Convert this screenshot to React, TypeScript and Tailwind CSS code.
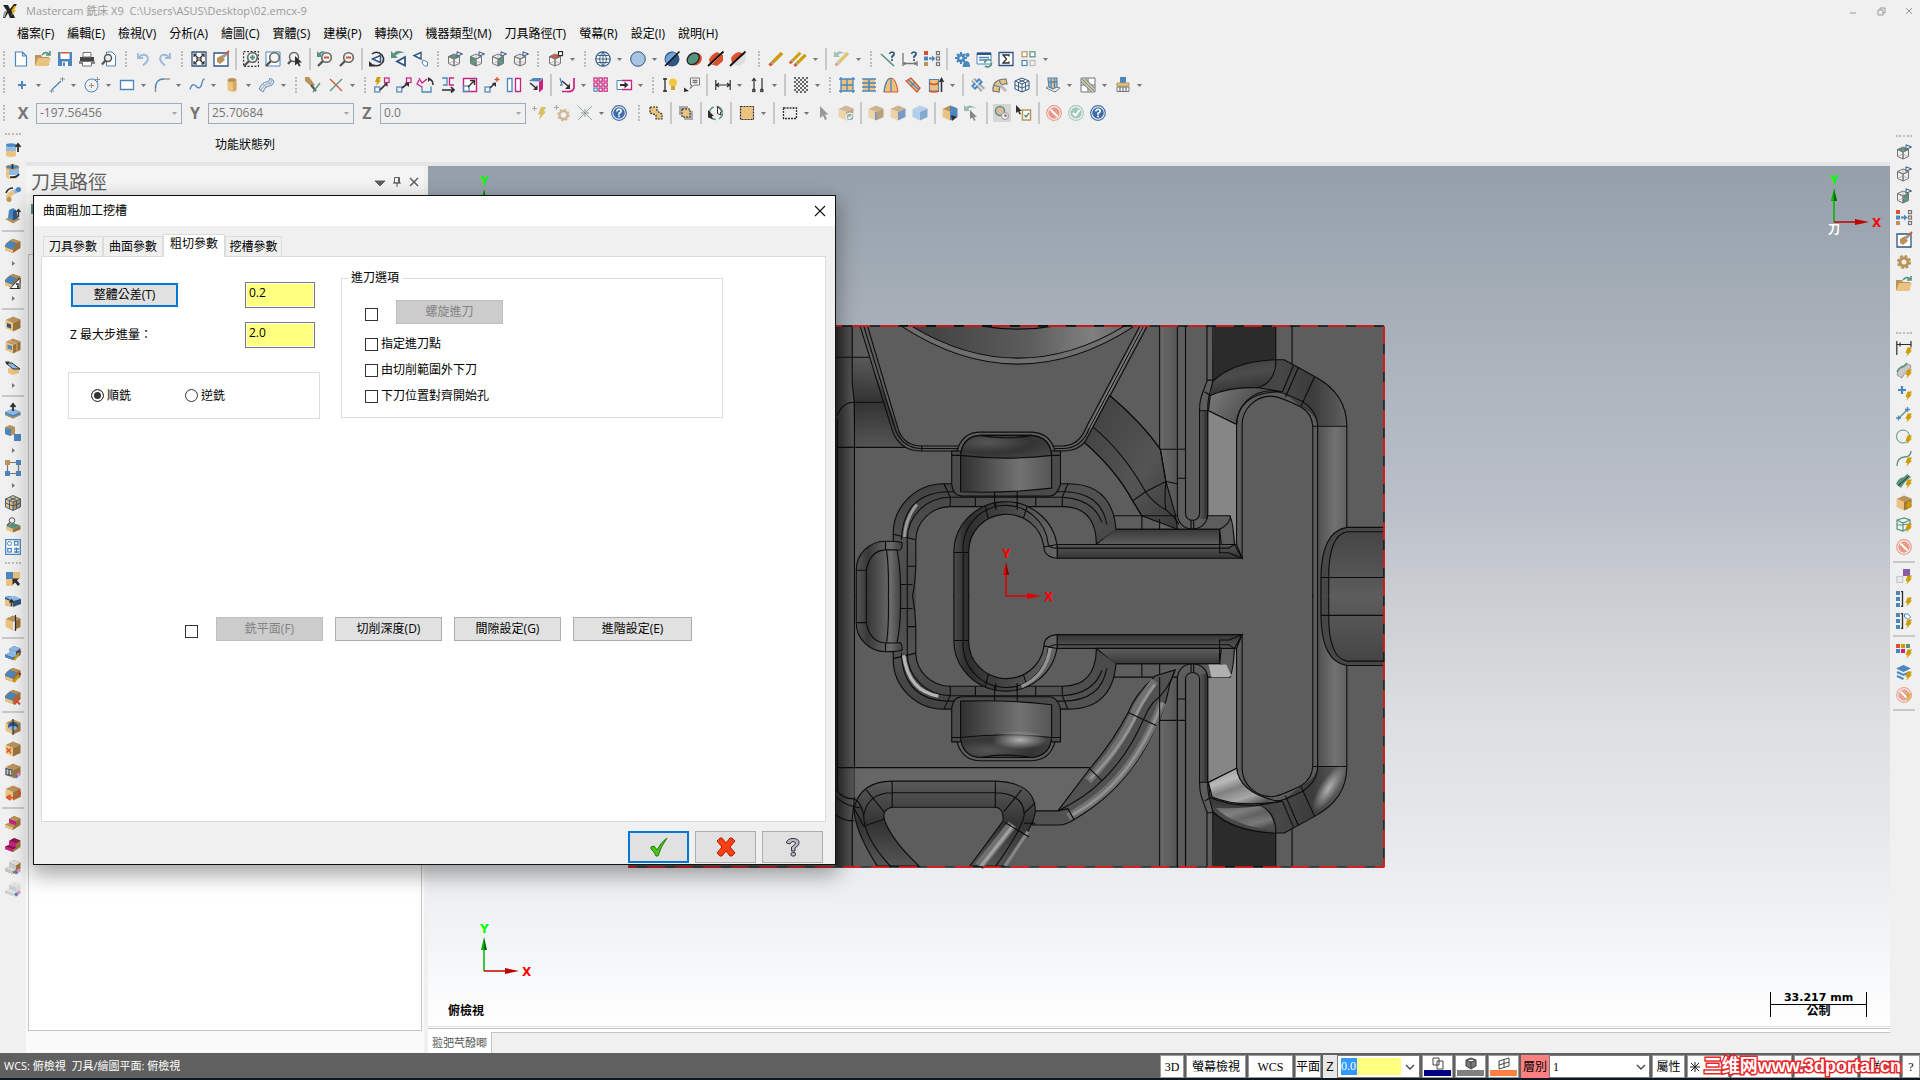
import type { ReactNode } from "react"

const BLUE = "#4b86bf"
const NAVY = "#2f5580"
const SKY = "#8fbbe6"
const TAN = "#b9935a"
const SAND = "#ebc381"
const BROWN = "#9c743e"
const GREEN = "#57937f"
const RED = "#da512f"
const PINK = "#c9217f"
const GRAY = "#757575"
const GOLD = "#cf9c00"
const INK = "#2f2f2f"

// Small shared pieces, all drawn on a 16x16 grid
const Line = ({ d, c = GRAY, w = 1.3, f = "none" }: { d: string; c?: string; w?: number; f?: string }) => (
  <path d={d} stroke={c} strokeWidth={w} fill={f} />
)
const Fill = ({ d, c }: { d: string; c: string }) => <path d={d} fill={c} />
const Cube = ({ t = TAN, l = SAND, r = BROWN }: { t?: string; l?: string; r?: string }) => (
  <>
    <Fill d="M8 .5L15.500 3.500 8 7 .5 4z" c={t} />
    <Fill d="M.5 4L8 7V15.500L.5 12z" c={l} />
    <Fill d="M15.500 3.500L8 7V15.500L15.500 12z" c={r} />
  </>
)
const Bolt = () => <Fill d="M11.500 6.500H16L14.300 9.500H16L10.500 15.500 11.500 12H9.500z" c={GOLD} />
const ViewCube = ({ t = "none", l = "none", r = "none", mark = true }: { t?: string; l?: string; r?: string; mark?: boolean }) => (
  <>
    <path d="M1.500 5.500L7 3 12.500 5.500 7 8z" fill={t} stroke={GRAY} />
    <path d="M1.500 5.500L7 8V15L1.500 12.500z" fill={l} stroke={GRAY} />
    <path d="M12.500 5.500L7 8V15L12.500 12.500z" fill={r} stroke={GRAY} />
    <Line d="M7 3V10L1.500 12.500M7 10L12.500 12.500" c="#9a9a9a" w={0.6} />
    {mark && <path d="M10 .8L15.500 3 10 5.200z" fill="#f0f0f0" stroke={NAVY} />}
  </>
)
const Lens = ({ sign, c = GREEN }: { sign?: string; c?: string }) => (
  <>
    <circle cx="9.500" cy="6.500" r="4.800" fill="#f4f4f4" stroke="#666" strokeWidth="1.600" />
    <Line d="M6 10L1 15" c="#555" w={2.400} />
    {sign && <Line d={sign} c={c} w={2} />}
  </>
)
const Pencil = () => (
  <>
    <Line d="M3 13L14 2" c={GOLD} w={3.400} />
    <Line d="M1.500 14.500L4 12" c={RED} w={3} />
    <Line d="M3.500 12.500L4.800 11.200" c="#aaa" w={3.200} />
  </>
)
const Badge = ({ c, children }: { c: string; children: ReactNode }) => (
  <>
    <circle cx="8" cy="8" r="7.300" fill="#fff" stroke={c} strokeWidth="1.200" />
    <circle cx="8" cy="8" r="5.800" fill={c} />
    {children}
  </>
)
const Ask = () => (
  <Badge c="#3f6da8">
    <Line d="M5.800 6.500Q6 4.300 8 4.300 10.300 4.500 10.200 6.300 10 7.600 8 8.300V9.800" c="#fff" w={1.600} />
    <Fill d="M7.200 10.600H8.900V12.200H7.200z" c="#fff" />
  </Badge>
)
const Ban = () => (
  <Badge c="#e79b8a">
    <Line d="M4.500 4.500L11.500 11.500" c="#fff" w={2} />
  </Badge>
)
const Eraser = () => (
  <>
    <Line d="M10 14.500L12.500 12.500" c={BLUE} w={3} />
    <Line d="M12.500 12.500L15 10.500" c="#e88bb5" w={3} />
  </>
)
const Step = ({ t = TAN, l = SAND, r = BROWN, u = t }: { t?: string; l?: string; r?: string; u?: string }) => (
  <>
    <Fill d="M4 4L9 1 15.500 3.500V10L8 15 0 12V9.500L4 8z" c={r} />
    <Fill d="M4 4L9 1 15.500 3.500 11 6.500z" c={t} />
    <Fill d="M4 4L11 6.500V11L4 8z" c={u} />
    <Fill d="M0 9.500L4 8 11 10.500 8 12.500z" c={t} />
    <Fill d="M0 9.500L8 12.500V15L0 12z" c={l} />
  </>
)
const Dome = ({ c = BLUE }: { c?: string }) => (
  <>
    <Fill d="M0 7Q4 2 8 1L15.500 3.500V10L8 15 0 12z" c={BROWN} />
    <Fill d="M0 9Q1 5 5 3L12 5Q8 8 8 12z" c={c} />
    <Fill d="M0 9L8 12V15L0 12z" c={SAND} />
    <Fill d="M5 3L8 1 15.500 3.500 12 5z" c={TAN} />
  </>
)
const Pointer = ({ c = INK }: { c?: string }) => <Fill d="M4 1L12.500 9.500H9L11 14 9 15 7 10.500 4 13z" c={c} />
const Net = () => (
  <>
    <path d="M8 1L15 4V12L8 15 1 12V4z" fill="#f4f4f4" stroke={NAVY} />
    <Line d="M1 4L8 7 15 4M8 7V15M1 8L8 11 15 8M4.500 2.500L11.500 5.500V13.500M11.500 2.500L4.500 5.500V13.500" c={NAVY} w={0.9} />
  </>
)
const Quad = ({ x, y, c, f = "none", s = 4 }: { x: number; y: number; c: string; f?: string; s?: number }) => (
  <rect x={x} y={y} width={s} height={s} fill={f} stroke={c} strokeWidth="1.200" />
)

const icons: Record<string, ReactNode> = {
  new: <path d="M2.500 1H9.500L13.500 5V15H2.500zM9.500 1V5H13.500" fill="#fff" stroke={BLUE} strokeWidth="1.200" />,
  open: <><Fill d="M0 4H6L7 6H14V14H0z" c={TAN} /><Fill d="M3 7H16L13 15H0z" c={SAND} /><Line d="M7 4Q10 0 14 3M15 0V4H11" c={GREEN} w={1.600} /></>,
  save: <><Fill d="M1 1H15V15H1z" c={BLUE} /><Fill d="M3.500 1H12.500V8H3.500z" c="#fff" /><Fill d="M3.500 1H12.500V2.500H3.500z" c={RED} /><Fill d="M5 10.500H11V15H5z" c="#fff" /><Fill d="M6 11.500H8V15H6z" c={BLUE} /></>,
  print: <><Fill d="M1 6H15V12H1z" c="#444" /><path d="M4 1.500H12V6H4z" fill="#fff" stroke={GRAY} /><Fill d="M0 10H16V13H0z" c="#888" /><path d="M3.500 10.500H12.500V15H3.500z" fill="#fff" stroke={GRAY} /></>,
  preview: <><path d="M5.500 1H11L14.500 4.500V15H5.500z" fill="#fff" stroke={BLUE} /><circle cx="7" cy="7" r="3.500" fill="#eee" stroke="#555" strokeWidth="1.500" /><Line d="M4.500 9.500L1 13.500" c="#555" w={2.200} /></>,
  undo: <Line d="M3 2V7H8M3.500 6.500Q8 2 12 5 15 9 8 14.500" c="#9db9d6" w={1.900} />,
  redo: <Line d="M13 2V7H8M12.500 6.500Q8 2 4 5 1 9 8 14.500" c="#9db9d6" w={1.900} />,
  fit: <><path d="M1 1H15V15H1z" fill="#fff" stroke={NAVY} strokeWidth="1.300" /><Line d="M3 6V3H6M10 3H13V6M13 10V13H10M6 13H3V10M3 3L7 7M13 3L9 7M3 13L7 9M13 13L9 9M6 7H10V9H6z" c={INK} w={1.100} /></>,
  repaint: <><path d="M1 2H15V15H1z" fill="#fff" stroke={NAVY} strokeWidth="1.300" /><Fill d="M4 7L9 4 12 9 7 13 4 11z" c={TAN} /><Line d="M10 6L13 3" c="#999" w={3} /><Line d="M13 3L16 0" c={RED} w={1.800} /></>,
  zoomWin: <><path d="M.6 .6H15.400V15.400H.6z" fill="none" stroke={INK} strokeWidth="1.100" strokeDasharray="2 1.500" /><Lens sign="M7 6.500H12M9.500 4V9" /></>,
  zoomTarget: <><path d="M1 1H15V15H1z" fill="#fff" stroke={BLUE} /><Lens /></>,
  zoomSel: <><circle cx="7" cy="6" r="4.500" fill="#f4f4f4" stroke="#666" strokeWidth="1.500" /><Line d="M4 9.500L1 13" c="#555" w={2.200} /><Fill d="M8 5L15 11.500H12L13.500 15 12 15.600 10.500 12.500 8 14.500z" c={INK} /></>,
  unzoomPrev: <><Lens sign="M7 6.500H12" c={RED} /><Fill d="M0 0V6H6L3.500 3.500Q6 1 9 1 4 -1 2 2z" c={GREEN} /></>,
  unzoom: <Lens sign="M7 6.500H12" c={RED} />,
  rotate: <><Line d="M3 3Q8 -1 13 4 17 10 11 14 7 15.500 4 14" c={INK} w={1.500} /><path d="M11.500 4.500L3.500 8 11.500 11.500z" fill="#fff" stroke={NAVY} strokeWidth="1.500" /><Fill d="M0 10V15.500H6z" c={INK} /></>,
  prevView: <><path d="M14 6L6 10.500 14 14.500z" fill="#fff" stroke={NAVY} strokeWidth="1.800" /><Fill d="M0 0V7H7L4.500 4.500Q8 1 14 2 6 -2 2.500 2.500z" c={GREEN} /></>,
  namedView: <><path d="M8 1.500L1 4.500 8 8z" fill="#fff" stroke={NAVY} strokeWidth="1.400" /><path d="M10 9L14.500 11V15H11.500L9 12z" fill="#fff" stroke={BLUE} /></>,
  top: <ViewCube t={GREEN} />,
  front: <ViewCube l={GREEN} />,
  right: <ViewCube r={GREEN} />,
  iso: <ViewCube />,
  cplane: <><ViewCube t={RED} mark={false} /><Quad x={10.500} y={0.600} c={INK} f="#fff" /></>,
  globe: <><circle cx="8" cy="8" r="7.200" fill="#fff" stroke={NAVY} strokeWidth="1.200" /><Line d="M8 1V15M1 8H15M8 1Q1 8 8 15M8 1Q15 8 8 15M2.500 4.500H13.500M2.500 11.500H13.500" c={NAVY} w={0.9} /></>,
  ball: <circle cx="8" cy="8" r="7.300" fill="#a9c4e2" stroke={NAVY} />,
  ballCut: <><circle cx="8" cy="8" r="7.500" fill={NAVY} /><path d="M3 13.500A7.500 7.500 0 0 1 13.500 3z" fill="#6ea3dc" /><Line d="M1 15L15.500 .5" c="#111" w={1.600} /></>,
  disc: <><ellipse cx="9" cy="9" rx="6.800" ry="6" transform="rotate(-40 8 8)" fill={RED} /><ellipse cx="7.500" cy="7.300" rx="7.300" ry="5.800" transform="rotate(-40 8 8)" fill="#222" /><ellipse cx="7.500" cy="7.300" rx="6" ry="4.400" transform="rotate(-40 8 8)" fill={GREEN} /></>,
  redCut: <><Fill d="M1 8Q4 3 9 1L15 4V10L9 15 2 13z" c={RED} /><Line d="M4 13L13 4" c="#ffb8a5" w={1} /><Line d="M0 15L15.500 .5" c="#111" w={1.800} /></>,
  redCut2: <><Fill d="M1 7Q4 2 9 1L15 3 2 13z" c={RED} /><Fill d="M15 4V11L9 15 3 13z" c="#ddd" /><Line d="M0 15L15.500 .5" c="#111" w={1.800} /></>,
  pencil: <Pencil />,
  pencils: <><g transform="translate(-2.500 0) scale(.85)"><Pencil /></g><g transform="translate(2 2) scale(.9)"><Pencil /></g></>,
  unpencil: <g opacity="0.5"><Pencil /><Fill d="M0 0V6H6L4 4Q7 1 11 3 6 -2 2 2z" c={GREEN} /></g>,
  askLine: <><Line d="M1 3L14 15" c={GREEN} w={1.700} /><Line d="M9.500 3Q10 1 12 1 14.500 1.500 14 3.500 13.500 4.500 12 5.500V7M12 8V10" c={NAVY} w={1.700} /></>,
  askDim: <><Line d="M1 2V15M15 10V15M1 12.500H15M3 11V14M13 11V14" /><Line d="M9.500 3Q10 1 12 1 14.500 1.500 14 3.500 13.500 4.500 12 5.500V7M12 8V10" c={NAVY} w={1.700} /></>,
  levels: <><Fill d="M0 0H4V4H0z" c={RED} /><Fill d="M0 5.500H4V9.500H0z" c={BLUE} /><Fill d="M0 11H4V15H0z" c={TAN} /><Line d="M5 7.500H10" c={BLUE} w={2} /><Fill d="M8 4.500L11.500 7.500 8 10.500z" c={BLUE} /><Quad x={12.500} y={0.600} c={GRAY} s={3} /><Quad x={12.500} y={6} c={GRAY} s={3} /><Quad x={12.500} y={11.500} c={GRAY} s={3} /></>,
  cogs: <><Line d="M7 1V13M1 7H13M3 3L11 11M11 3L3 11" c={BLUE} w={2.200} /><circle cx="7" cy="7" r="4" fill={BLUE} /><circle cx="7" cy="7" r="1.600" fill="#f0f0f0" /><circle cx="13.500" cy="4" r="2" fill={BLUE} /><Fill d="M8.500 16Q9 10 12.500 10 16 10 16 16z" c={BLUE} /></>,
  regen: <><path d="M1 2H15V13H1z" fill="#fff" stroke={BLUE} /><Fill d="M1 1.500H15V4H1z" c={NAVY} /><Line d="M3 6.500H13M3 9H10" c={BLUE} /><path d="M8.500 12A4 4 0 0 1 15 9.500M15.500 12A4 4 0 0 1 9 15" fill="none" stroke={GREEN} strokeWidth="1.800" /></>,
  sum: <><path d="M1 1.500H15V14.500H1z" fill="#fff" stroke={NAVY} strokeWidth="1.300" /><Line d="M11 5.500V4H5L8.500 8 5 12H11V10.500" c={INK} w={1.300} /></>,
  quads: <><Quad x={1} y={0.800} c={TAN} f="#fff" s={5} /><Quad x={9} y={0.800} c={GREEN} f="#fff" s={5} /><Quad x={1} y={9.500} c={BLUE} f="#fff" s={5} /><Quad x={9} y={9.500} c="#bbb" s={5} /></>,
  plus: <Line d="M8 4V12M4 8H12" c={BLUE} w={2} />,
  line: <><Line d="M3 12.500L12 4" c={BLUE} /><Line d="M.5 14H5M2.700 12V16M11 2H16M13.500 0V4.500" c="#888" w={0.9} /></>,
  circle: <><circle cx="7.500" cy="8.500" r="6.500" fill="none" stroke={BLUE} /><Line d="M5 8.500H10M7.500 6V11M11 2.500H16M13.500 0V5" c="#888" w={0.9} /></>,
  rect: <path d="M1.500 3.500H14.500V12.500H1.500z" fill="#fff" stroke={BLUE} strokeWidth="1.300" />,
  fillet: <><Line d="M1.500 15V9" c="#888" /><Line d="M1.500 11Q1.500 2 10 2" c={BLUE} /><Line d="M9 2H16" c="#888" /></>,
  spline: <Line d="M1 12.500Q3 5 7 9 11 14 13 6 13.500 3 15.500 1.500" c={BLUE} />,
  cyl: <><Fill d="M3.500 3H12.500V13Q8 16.500 3.500 13z" c={SAND} /><ellipse cx="8" cy="3" rx="4.500" ry="2" fill={TAN} /><Fill d="M9 5H12.500V13Q11 14.500 9 14.800z" c="#d8a862" /></>,
  surf: <><path d="M0 12Q3 5 8 5 11 4 11 1L15 4Q14 9 10 9 6 9 4 15z" fill="#dfe6ee" stroke={BLUE} strokeWidth="0.9" /><Line d="M2 13.500Q5 7 9 7 13 6 13 2.500M4 7L8 11M9 4L12 8" c="#999" w={0.8} /></>,
  trim: <><Fill d="M0 0L4 0 10 8 7 10 0 4z" c={TAN} /><Line d="M6 8L11 14" c="#555" w={2.200} /><Line d="M8 15L15 6" c={GREEN} /></>,
  breakX: <><Line d="M2 2L14 14" c={RED} /><Line d="M2 14L14 2" c={GREEN} /></>,
  xform1: <><Quad x={0.800} y={10} c={BLUE} s={5} /><Quad x={10.500} y={1} c={PINK} s={4.500} /><Line d="M6 13L12 7" c={INK} w={1.700} /><Fill d="M13.500 6V10L10 6.500z" c={INK} /><Fill d="M3 0H7L5 3.500H7L2 9 3 5H1z" c={GOLD} /></>,
  xform2: <><Quad x={0.800} y={10} c={BLUE} s={5} /><Quad x={10.500} y={1} c={PINK} s={4.500} /><Line d="M6 11L11 7" c={INK} w={1.700} /><Fill d="M13 5.500V10L8.500 6z" c={INK} /></>,
  rotateX: <><path d="M4 9.500V15H13V9.500" fill="none" stroke={BLUE} strokeWidth="1.300" /><Line d="M1 1L4 6 9 2M1 3L-1 7 4 10" c={PINK} /><Line d="M11 2Q15 3 15 8" c={INK} w={1.500} /><Fill d="M10 0V5L13 2z" c={INK} /></>,
  mirror: <><Line d="M2 1H7V8H3M7 8V1" c={BLUE} /><Line d="M14 1H9.500V8H14" c={PINK} /><Line d="M2 13H13M11 10L14 13 11 15.500" c={INK} w={1.700} /></>,
  scale: <><path d="M1.500 1.500H14.500V14.500H1.500z" fill="#fff" stroke={PINK} strokeWidth="1.400" /><Quad x={1.500} y={9} c={BLUE} s={5.500} /><Line d="M6 10L12 4M12.500 8V3.500H8" c={INK} w={1.400} /></>,
  moveTo: <><Quad x={1} y={10} c={BLUE} s={5} /><Line d="M6 11L10 7" c={INK} w={1.600} /><Fill d="M12 5.500V10L8 6z" c={INK} /><Line d="M13 0V5M10.500 2.500H15.500" c={RED} /></>,
  offset: <><path d="M1.500 1.500H6V14.500H1.500z" fill="#fff" stroke={BLUE} strokeWidth="1.300" /><path d="M9.500 1.500H14.500V14.500H9.500z" fill="#fff" stroke={PINK} strokeWidth="1.300" /></>,
  project: <><Fill d="M1 4L5 1H15L11 4.500z" c={BLUE} /><Fill d="M11 5L15 1.500V12L11 15.500z" c={PINK} /><Line d="M2 6L8 11" c={INK} w={1.600} /><Fill d="M9.500 8V13H5z" c={INK} /></>,
  wrap: <><Line d="M1 1L3 8H1" c={BLUE} /><Line d="M15 1V11Q14 15 8 14.500H3" c={PINK} w={1.700} /><Line d="M3 4L9 9" c={INK} w={1.600} /><Fill d="M11 6.500V12H6z" c={INK} /></>,
  array: <>{[1, 6, 11].map(y => [1, 6, 11].map(x => <Quad key={`${x}-${y}`} x={x} y={y} c={x === 1 && y === 11 ? BLUE : PINK} f="#fff" s={3.200} />))}</>,
  stretch: <><path d="M1 3.500H7V12.500H1z" fill="#fff" stroke={BLUE} /><path d="M6 3.500H15.500V12.500H6" fill="#fff" stroke={PINK} strokeWidth="1.300" /><Line d="M4 8H10" c={INK} w={2} /><Fill d="M8.500 4.500L12.500 8 8.500 11.500z" c={INK} /></>,
  bulb: <><Line d="M3 1V15M1 2H5M1 14H5" c={INK} /><circle cx="11" cy="5.500" r="4" fill="#efc93a" /><Fill d="M9 9H13V13H9z" c="#c9a53a" /></>,
  note: <><path d="M6.500 1H15.500V8H10L6 11.500 8 8H6.500z" fill="#fff" stroke={GRAY} /><Line d="M8.500 3.500H13.500M8.500 5.500H13.500" /><Fill d="M0 15V10.500L5 14z" c={INK} /></>,
  dimH: <Line d="M.8 3V13M15.200 3V13M1 8H15M4 6L1.500 8 4 10M12 6L14.500 8 12 10" c={INK} w={1.200} />,
  dimV: <><Line d="M4 1V13M12 1V13M2 4L4 1.500 6 4" c={INK} w={1.200} /><Quad x={2.800} y={12.500} c={INK} s={2} /><Quad x={10.800} y={12.500} c={INK} s={2} /></>,
  hatch: <>{[0, 2, 4, 6, 8, 10, 12, 14].map((y, i) => <path key={y} d={`M${1 + (i % 2) * 2} ${y + 1}H15`} stroke="#666" strokeWidth="2" strokeDasharray="2 2" />)}</>,
  netSurf: <><Fill d="M2 2H14V14H2z" c={SAND} /><Line d="M2 0V16M14 0V16M0 2H16M0 14H16M8 2V14M2 8H14" c={BLUE} w={1.300} /></>,
  ruled: <><Fill d="M2 2H14V14H2z" c={SAND} /><Line d="M1 2H15M1 6H15M1 10H15M1 14H15M8 2V14" c={BLUE} w={1.500} /></>,
  loft: <><path d="M1 15Q3 1 8 1 13 1 15 15z" fill={SAND} stroke={RED} /><Line d="M8 1V15M1 15Q2 5 6 1.500" c={BLUE} /></>,
  sweep: <><path d="M1 4L6 1 15 11 12 15z" fill={SAND} stroke={RED} strokeWidth="1.300" /><Line d="M3 2.500L14 13M6 9L10 5" c={BLUE} /></>,
  revolve: <><path d="M1.500 2.500H10.500V14H1.500z" fill={SAND} stroke={BLUE} strokeWidth="1.200" /><Line d="M1 6Q6 9 11 6M1 14Q6 16 11 14" c={RED} w={1.500} /><Line d="M13.500 15V3M11.500 5L13.500 1.500 15.500 5" c={INK} w={1.500} /></>,
  tsurf: <><Fill d="M1 4L5 1 15 11 11 15z" c="#aaa" /><Fill d="M1 9L9 1 13 5 5 13z" c={BLUE} /><Line d="M3 3L13 13M4 10L10 4" c="#eee" /></>,
  tsurf2: <><path d="M1 14Q0 2 14 2L15 7Q7 6 7 15z" fill={SAND} stroke={GRAY} strokeWidth="1.200" /><Line d="M2 8L8 10M7 3L9 7" c={BLUE} /><Line d="M8 8L14 14" c="#bbb" w={3} /></>,
  net: <Net />,
  plane: <><path d="M1 11L5 8 15 11 10 15z" fill="#fff" stroke={GRAY} /><path d="M3 1H12V10L8 12 4 10z" fill={SAND} stroke={BLUE} strokeWidth="1.200" /><Line d="M6 1V11M9.500 1V11M3.500 5H12" c={BLUE} /></>,
  stripe: <><path d="M1 1H15V15H1zM1 8H15M8 1V15" fill="#fff" stroke={GRAY} /><Line d="M3 3L13 13" c={BLUE} w={6} /><Line d="M3 3L13 13" c={SAND} w={4} /><Line d="M2 2L14 14" c={BLUE} w={1} /></>,
  press: <><Fill d="M5 0H11V6H5z" c={BLUE} /><path d="M2 6H14V9H2z" fill={SAND} stroke={TAN} /><path d="M2 14.500V10H14V14.500z" fill="#fff" stroke={GRAY} /><Line d="M5 10V14M8 10V14M11 10V14" c={GRAY} /></>,
  ptBolt: <g opacity="0.6"><Line d="M2.500 1V6M0 3.500H5" c={GRAY} w={1} /><Fill d="M9 2H14L11.500 6.500H14L7 15 8.500 9.500H6z" c={GOLD} /></g>,
  ptGear: <g opacity="0.6"><Line d="M2.500 0V5M0 2.500H5" c={GRAY} w={1} /><circle cx="9.500" cy="10" r="4" fill="none" stroke={TAN} strokeWidth="2.400" /><circle cx="9.500" cy="10" r="5.500" fill="none" stroke={TAN} strokeWidth="1.500" strokeDasharray="2.200 2.100" /></g>,
  cross: <g opacity="0.7"><Line d="M1 1L15 15M15 1L1 15" c={GREEN} w={1} /><Line d="M8 4V12M4 8H12" c={GRAY} w={1} /></g>,
  help: <Ask />,
  selA: <path d="M2 2H9V6L14 9V14H8V10L2 8z" fill={SAND} stroke={INK} strokeWidth="1.200" strokeDasharray="2 1" />,
  selB: <><Fill d="M1 1H10V4H4V10H1z" c="#aaa" /><Fill d="M15 6V15H6V12H12V6z" c="#aaa" /><path d="M4 4H12V12H4z" fill={SAND} stroke={INK} strokeDasharray="2 1" /></>,
  selC: <><circle cx="8" cy="8" r="6.500" fill="none" stroke={GREEN} strokeWidth="1.500" strokeDasharray="7 3.200" /><Fill d="M0 5L6 11H4L4.500 14 0 12.500z" c={INK} /><path d="M9.500 1.500L14.500 7H12.500L13 10 9.500 8.500z" fill="#fff" stroke={INK} /></>,
  selD: <path d="M1.500 1.500H14.500V14.500H1.500z" fill={SAND} stroke={INK} strokeWidth="1.200" strokeDasharray="2 1" />,
  selE: <path d="M1.500 3H14.500V13.500H1.500z" fill="none" stroke={INK} strokeWidth="1.300" strokeDasharray="2 1" />,
  ptr: <Pointer c="#999" />,
  solOk: <g opacity="0.6"><Cube /><circle cx="12" cy="12" r="4" fill={GREEN} stroke="#fff" /><Line d="M10 12L11.500 13.500 14 10.500" c="#fff" /></g>,
  solEdge: <g opacity="0.65"><Cube /><Line d="M8 7V15" c="#3f6da8" w={2} /></g>,
  solFace: <g opacity="0.65"><Cube r="#3f6da8" /></g>,
  solBody: <g opacity="0.65"><Cube t="#9bc0e8" l={SKY} r={BLUE} /></g>,
  solBack: <><Cube r={BLUE} t={TAN} /><Fill d="M8 .5L15.500 3.500 8 7z" c={BLUE} /><Fill d="M9 10L15 12 10 16z" c={INK} /></>,
  ptrBack: <g opacity="0.55"><Fill d="M0 0V6H6L4 4Q8 1 13 4 6 -2 2 2z" c={GREEN} /><Fill d="M6 5L13 12H10L11.500 15 10 16 8.500 12.500 6 14z" c={INK} /></g>,
  live: <><path d="M-1 -1H17V17H-1z" fill="#d6d6d6" /><circle cx="6" cy="6" r="4.500" fill="#e5b7a5" stroke={GREEN} strokeWidth="1.500" /><circle cx="11" cy="11" r="3.500" fill="#f0f0f0" stroke="#999" /><Line d="M11 9V11H13" /></>,
  check: <><Fill d="M0 0L6 6H3.500L5 9 3.500 9.500 2 6.500 0 8z" c={INK} /><path d="M6.500 5H14.500V15H6.500z" fill="#fff" stroke={TAN} strokeWidth="1.500" /><Line d="M8.500 10L10 12 13 8" c={GREEN} w={1.500} /></>,
  ban: <Ban />,
  okay: <Badge c="#a5c8ba"><Line d="M5 8L7.500 10.500 11.500 5" c="#fff" w={2} /></Badge>,
  sExtrude: <><Fill d="M1 3H11V9H1z" c={SKY} /><Fill d="M1 9H11V14Q6 16 1 14z" c={SAND} /><ellipse cx="6" cy="3" rx="5" ry="1.800" fill={BLUE} /><Line d="M13 10V3M10.500 5L13 2 15.500 5" c={INK} w={1.800} /></>,
  sRevolve: <><Fill d="M1 3H14V11H1z" c={SKY} /><Fill d="M1 3H4V13L14 15H4Q1 14 1 11z" c={SAND} /><ellipse cx="7.500" cy="3" rx="6.500" ry="2" fill={BLUE} stroke={TAN} /><Line d="M7.500 0V5M5 13Q12 14 14 10" c={INK} w={1.700} /></>,
  sSweep: <><Fill d="M1 10Q4 5 8 4L10 8Q6 9 6 14H2z" c={SAND} /><Fill d="M8 4L14 1V6L10 8z" c={SKY} /><circle cx="13.500" cy="3.500" r="2.500" fill={BLUE} /><circle cx="4" cy="13.500" r="2.500" fill={TAN} /><Line d="M1 7Q3 2 8 2" c={INK} w={1.700} /></>,
  sLoft: <><Fill d="M0 11L8 8 15.500 11 8 15.500z" c={TAN} /><Fill d="M4 2L8 0 11 2 13 10 8 12.500 3 10z" c={BLUE} /><Fill d="M8 3L11 2 13 10 8 12.500z" c={NAVY} /><Line d="M13.500 9V2M11.500 4L13.500 1.500 15.500 4" c={INK} w={1.300} /></>,
  sFillet: <Dome />,
  sFillet1: <><Dome /><path d="M15 5V15.500H5z" fill="#fff" stroke={INK} /><Line d="M11 11H13V14M12 14H14" c={INK} /></>,
  sShell: <><Cube /><Fill d="M2 7L6 8.500V12.500L2 11z" c={NAVY} /></>,
  sBool: <><Cube /><Fill d="M2.500 6.500L7 8V12L2.500 10.500z" c={BLUE} /><Line d="M4 3L12 6V14" c={SAND} w={0.8} /></>,
  sDraft: <><Fill d="M3 8L14 9V13L8 15 3 13z" c={SAND} /><path d="M1 3L7 3 15 9 8 9z" fill={SKY} stroke={INK} /><Fill d="M0 1.500H5L2 5z" c={INK} /></>,
  sThick: <><Fill d="M0 9L8 5.500 15.500 9V12L8 15.500 0 12z" c={BLUE} /><Fill d="M0 11L8 14 15.500 11V12L8 15.500 0 12z" c={TAN} /><Fill d="M0 9L8 5.500 15.500 9 8 12z" c={SKY} /><Line d="M8 8V2M5.500 4L8 1 10.500 4" c={INK} w={1.800} /></>,
  sCopy: <><Fill d="M0 2L5 0 10 2V9L5 11 0 9z" c={TAN} /><Fill d="M0 3L6 4V11L0 9z" c={BLUE} /><Fill d="M9 9H16V16H9z" c={BLUE} /></>,
  sPat: <><path d="M2.500 2.500H13.500V13.500H2.500z" fill="none" stroke={GRAY} strokeWidth="1.200" /><Fill d="M0 0H5V5H0z" c={TAN} /><Fill d="M11 0H16V5H11zM0 11H5V16H0zM11 11H16V16H11z" c={BLUE} /></>,
  sNet: <><Cube t={SAND} l={SAND} r={TAN} /><Line d="M.5 4L8 7 15.500 4M8 7V15M.5 8L8 11 15.500 8M4.500 2.500L11.500 5.500V13.500M11.500 2.500L4.500 5.500V13.500M8 .5L15.500 4V12L8 15.500 .5 12V4z" c={NAVY} w={0.9} /></>,
  sFind: <><Fill d="M1 9L8 12V15.500L1 13z" c={SAND} /><Fill d="M1 9L8 6 15.500 8.500 8 12z" c={GREEN} /><Fill d="M15.500 8.500V12.500L8 15.500V12z" c={BROWN} /><circle cx="7" cy="3.500" r="2.800" fill="#eee" stroke="#555" /><Line d="M5 5.500L2 8.500" c="#555" w={1.500} /></>,
  sTree: <><path d="M.7 .7H15.300V15.300H.7z" fill="#fff" stroke={BLUE} strokeWidth="1.300" /><circle cx="4.500" cy="4.500" r="2" fill="none" stroke={BLUE} /><Quad x={9.500} y={2.500} c={BLUE} s={3.500} /><Quad x={2.800} y={9.500} c={BLUE} s={3.500} /><Line d="M9 10H14M9 13H14M11.500 8.500V14" c={BLUE} /></>,
  mSel: <><Fill d="M1 1H8V8H1z" c={BLUE} /><Fill d="M8 1H15V8H8zM1 8H8V15H1z" c={SAND} /><Fill d="M7.500 7.500H14L12 9.500 15 13 13 15 10 11.500 7.500 14z" c={INK} /></>,
  mPush: <><Fill d="M0 4L4 3 16 6V11L8 14 0 12z" c={NAVY} /><Fill d="M0 4L10 3 16 6 8 8z" c={SKY} /><Fill d="M0 6L8 9V14L0 12z" c={SAND} /><Line d="M6.500 13V8M4.500 9.500L6.500 7 8.500 9.500" c={INK} w={1.500} /></>,
  mSplit: <><Cube /><Fill d="M8 7L11 5.500V14L8 15.500z" c="#eee" /><Line d="M10.500 0V16" c={INK} w={1.200} /></>,
  eStep: <><Step t={SKY} l={BLUE} r={NAVY} /><Line d="M9 15L14 8" c={GOLD} w={2.200} /><Line d="M14 8L15.500 6" c="#933" w={2.200} /></>,
  eDome: <><Dome /><Line d="M9 15L14 8" c={GOLD} w={2.200} /><Line d="M14 8L15.500 6" c="#933" w={2.200} /></>,
  xDome: <><Dome /><Line d="M9 9L15 15.500M15 9L9 15.500" c={RED} w={2} /></>,
  hole: <><Cube l={SAND} /><ellipse cx="8" cy="7" rx="5" ry="4" fill={NAVY} /><ellipse cx="8" cy="9" rx="4" ry="2" fill={SKY} /><Line d="M8 0V16" c={INK} w={1.200} /></>,
  xCube: <><Cube /><Line d="M1.500 7L6 12M6 7.500L1.500 11.500" c={RED} w={1.200} /></>,
  wCube: <><Cube /><Line d="M1 5.500V11.500L7 13V7zM4 6.500V12" c={NAVY} w={1.200} /><Eraser /></>,
  rCube: <><Cube /><Line d="M13 5Q17 8 14 11 10 13 4 12.500M5.500 10L2 12.500 5.500 15" c={RED} w={1.900} /></>,
  pStep: <Step u={PINK} />,
  pStep2: <Step t="#8a1757" l={PINK} u={PINK} />,
  gStep: <><Step t="#ddd" l="#c5c9cc" u="#c5c9cc" /><Eraser /></>,
  gStep2: <><Step t="#e2e2e2" l="#c9cdd0" u="#c9cdd0" r="#d6d8da" /><Eraser /></>,
  rGear: <><circle cx="8" cy="8" r="4" fill="none" stroke={TAN} strokeWidth="3" /><circle cx="8" cy="8" r="6" fill="none" stroke={TAN} strokeWidth="2.200" strokeDasharray="2.700 2" /></>,
  bDim: <><Line d="M.8 0V14M15 0V6M1 3.500H15M4 1.500V5.500" c={INK} w={1.200} /><Bolt /></>,
  bSurf: <><path d="M1 12Q2 5 8 4L12 1 15 3 14 6Q8 9 6 15z" fill="#c9c9cd" stroke="#999" /><Line d="M1 9Q3 4 8 3L11 0" c={GREEN} w={1.500} /><Bolt /></>,
  bPoint: <><Line d="M6 1V9M2 5H10" c={BLUE} w={2.200} /><Bolt /></>,
  bLine: <><Line d="M3 11L11 3" c={GREEN} /><Line d="M0 11H5M2.500 8.500V13.500M9 2.500H14M11.500 0V5" c={BLUE} /><Bolt /></>,
  bArc: <><circle cx="7" cy="7.500" r="6.500" fill="none" stroke={GREEN} /><Bolt /></>,
  bSpline: <><Line d="M1 15Q1 7 8 6 15 6 15 0" c={GREEN} w={1.300} /><Bolt /></>,
  bNet: <><path d="M0 11Q2 5 8 4L11 1 15 4Q9 8 5 15z" fill={GREEN} /><Line d="M2 13L13 3" c={INK} w={1} /><Bolt /></>,
  bSolid: <><Cube /><Bolt /></>,
  bWire: <><path d="M1 3L8 1 14 3V11L7 14 1 12zM1 3L7 6 14 3M7 6V14M1 8L14 7" fill="none" stroke={GREEN} strokeWidth="1.200" /><Bolt /></>,
  bColor: <><Fill d="M7 0H14V7H7z" c="#8a5bab" /><Quad x={0.700} y={7.500} c="#c5c9c9" f="#e8ecec" s={6} /><Bolt /></>,
  bGroup: <><Fill d="M0 0H4V4H0zM0 6H4V10H0zM0 12H4V16H0z" c={BLUE} /><Line d="M5 .6H6.500V15.400H5" c={INK} /><Bolt /></>,
  bGroup2: <><Fill d="M0 0H4V4H0zM0 6H4V10H0zM0 12H4V16H0z" c={BLUE} /><Line d="M5 .6H6.500V15.400H5" c={INK} /><path d="M8.500 1H12L14.500 4 12 6.500 8.500 4z" fill="#fff" stroke={BLUE} /><Bolt /></>,
  bPalette: <><Fill d="M0 1H4V5H0z" c={RED} /><Fill d="M5 1H9V5H5z" c={GOLD} /><Fill d="M10 1H14V5H10z" c={GREEN} /><Fill d="M0 6H4V10H0z" c={BLUE} /><Fill d="M5 6H9V10H5z" c={PINK} /><Bolt /></>,
  bLayers: <><Fill d="M7.500 0L15 3.500 7.500 7 0 3.500z" c={BLUE} /><Line d="M1 7L7.500 10 13 7.500M1 11L7.500 14" c={BLUE} w={2} /><Bolt /></>,
  bBan: <g opacity="0.9"><Ban /><g opacity="0.6"><Bolt /></g></g>,
}

const Icon = ({ name }: { name: string }) => (
  <svg viewBox="0 0 16 16" className="h-4 w-4 shrink-0 overflow-visible">{icons[name]}</svg>
)
const Caret = () => (
  <svg viewBox="0 0 5 3" className="h-[3px] w-[5px]"><path d="M0 0H5L2.500 3z" fill="#757575" /></svg>
)
const Grip = () => <span className="mx-[5px] h-4 w-0 shrink-0 border-l-2 border-dotted border-[#bdbdbd]" />

// "name+" is a button with a drop-down arrow, "|" a separator
function Tools({ items }: { items: string }) {
  return (
    <div className="flex items-center">
      {items.split(" ").map((item, i) => {
        if (item === "|") return <span key={i} className="mx-[3px] h-[22px] w-0 border-l-2 border-[#c8c8c8]" />
        const drop = item.endsWith("+")
        const name = drop ? item.slice(0, -1) : item
        return drop ? (
          <button key={i} aria-label={name} className="flex h-[22px] w-[35px] items-center justify-between pl-1 pr-1">
            <Icon name={name} />
            <Caret />
          </button>
        ) : (
          <button key={i} aria-label={name} className="flex h-[22px] w-[22px] items-center justify-center">
            <Icon name={name} />
          </button>
        )
      })}
    </div>
  )
}

function SideTools({ items }: { items: string }) {
  return (
    <div className="flex flex-col items-center">
      {items.split(" ").map((item, i) => {
        if (item === "|") return <span key={i} className="my-[3px] h-0 w-[22px] border-t-2 border-[#c8c8c8]" />
        if (item === ">") return <span key={i} className="flex h-[13px] items-center"><svg viewBox="0 0 3 5" className="h-[5px] w-[3px]"><path d="M0 0V5L3 2.500z" fill="#757575" /></svg></span>
        if (item === ":") return <span key={i} className="my-1 h-0 w-4 border-t-2 border-dotted border-[#bdbdbd]" />
        return (
          <button key={i} aria-label={item} className="flex h-[22px] w-[22px] items-center justify-center">
            <Icon name={item} />
          </button>
        )
      })}
    </div>
  )
}

const menus = ["檔案(F)", "編輯(E)", "檢視(V)", "分析(A)", "繪圖(C)", "實體(S)", "建模(P)", "轉換(X)", "機器類型(M)", "刀具路徑(T)", "螢幕(R)", "設定(I)", "說明(H)"]

const coords = [
  { axis: "X", value: "-197.56456" },
  { axis: "Y", value: "25.70684" },
  { axis: "Z", value: "0.0" },
]

function Header() {
  return (
    <header>
      <div className="flex h-[22px] items-center pl-[2px] pr-1">
        <svg viewBox="0 0 16 16" className="h-4 w-4">
          <path d="M1 2H6L8 6 12 1H15L10 8 13 15H8L6 10 3 15H1L5 8z" fill="#222" />
          <path d="M2 9L5 7 3 14H1z" fill="#999" />
          <path d="M12 3L9 8H11L9 13 14 7H12L14 3z" fill="#e2b100" />
        </svg>
        <h1 className="flex-1 whitespace-pre pl-2 text-[11px] leading-4 text-[#9b9b9b]">Mastercam 銑床 X9  C:\Users\ASUS\Desktop\02.emcx-9</h1>
        {["M4 9H10", "M4 6H9V11H4zM6 6V4H11V9H9", "M4 4L10 10M10 4L4 10"].map(d => (
          <button key={d} aria-label="window" className="ml-[14px] h-[14px] w-[14px]">
            <svg viewBox="0 0 14 14"><path d={d} fill="none" stroke="#9b9b9b" /></svg>
          </button>
        ))}
      </div>
      <nav className="flex h-[23px] items-center pl-[10px]">
        {menus.map(m => <button key={m} className="pl-[7px] pr-[6px] text-[12px] leading-4">{m}</button>)}
      </nav>
      <div className="-ml-[2px] flex h-7 items-center">
        <Grip />
        <Tools items="new open save print preview" /><Grip />
        <Tools items="undo redo" /><Grip />
        <Tools items="fit repaint | zoomWin zoomTarget zoomSel | unzoomPrev unzoom | rotate prevView namedView" /><Grip />
        <Tools items="top front right iso" /><Grip />
        <Tools items="cplane+" /><Grip />
        <Tools items="globe+ ball+ ballCut disc redCut redCut2" />
        <div className="w-1" /><Grip />
        <Tools items="pencil pencils+ | unpencil+" /><Grip />
        <Tools items="askLine askDim levels | cogs regen sum quads+" />
      </div>
      <div className="-ml-[2px] flex h-6 items-center">
        <Grip />
        <Tools items="plus+ line+ circle+ rect+ fillet+ spline+ cyl+ surf+" /><Grip />
        <Tools items="trim breakX+" /><Grip />
        <Tools items="xform1 xform2 rotateX mirror scale moveTo offset project | wrap+ array stretch+" /><Grip />
        <Tools items="bulb note | dimH+ dimV+ | hatch+" /><Grip />
        <Tools items="netSurf ruled loft sweep revolve+ | tsurf tsurf2 net | plane+ stripe+ press+" />
      </div>
      <div className="-ml-[2px] flex h-8 items-center">
        <Grip />
        {coords.map(c => (
          <div key={c.axis} className="flex items-center">
            <label htmlFor={`coord-${c.axis}`} className="w-[26px] text-center text-[16px] font-bold leading-5 text-[#757575]">{c.axis}</label>
            <span className="relative">
              <select id={`coord-${c.axis}`} className="block h-[21px] w-[146px] appearance-none border border-[#a0abba] px-[3px] text-[12px] leading-4 text-[#757575]">
                <option>{c.value}</option>
              </select>
              <span className="pointer-events-none absolute right-[5px] top-[9px] flex opacity-60"><Caret /></span>
            </span>
          </div>
        ))}
        <div className="w-[3px]" />
        <Tools items="ptBolt ptGear cross+ help" />
        <div className="w-[3px]" /><Grip />
        <Tools items="selA | selB | selC | selD+ | selE+ ptr solOk | solEdge solFace solBody | solBack ptrBack | live check | ban okay help" />
      </div>
    </header>
  )
}

function Axis({ up, right, className }: { up: string; right: string; className: string }) {
  return (
    <svg viewBox="0 0 60 60" className={`absolute h-[60px] w-[60px] font-['DejaVu_Sans'] text-[12px] font-bold ${className}`}>
      <path d="M10 50V24" stroke={up} strokeWidth="1.500" />
      <path d="M7 29L10 16 13 29z" fill={up} />
      <path d="M10 29V16L13 29z" fill="#000" fillOpacity="0.4" />
      <path d="M10 50H34" stroke={right} strokeWidth="1.500" />
      <path d="M31 47L45 50 31 53z" fill={right} />
      <text x="6" y="12" fill={up === "#00b400" ? "#00ff00" : "#ff0000"}>Y</text>
      <text x="48" y="55" fill="#ff0000">X</text>
    </svg>
  )
}

// Upper half of the cavity; the part is symmetric about its X axis
function CavityHalf() {
  return (
    <>
      {/* right runner */}
      <path d="M1065 43H1232V160L1062 200z" fill="#2b2b2b" stroke="none" />
      <path d="M1055 235L1062 195Q1120 140 1232 137H1255L1337 183Q1424 230 1424 320H1345Q1340 285 1300 267L1250 225 1170 214z" fill="url(#runner)" stroke="none" />
      <path d="M1345 318H1424V790H1345z" fill="url(#rail)" stroke="none" />
      <path d="M1062 200Q1120 140 1232 137 1235 195 1185 214L1055 235z" fill="url(#cap)" stroke="none" />
      <path d="M1062 195Q1120 140 1232 137H1255L1337 183Q1424 230 1424 320V790" />
      <path d="M1055 235Q1110 210 1185 214L1250 225Q1130 225 1126 315L1050 277z" fill="url(#cap2)" />
      <path d="M1050 277L1126 315V655L1108 566H1050z" fill="#868686" stroke="none" />
      <path d="M1026 277V575H1048V277z" fill="url(#wall)" stroke="none" />
      <path d="M1046 43V195L1030 240Q1026 255 1026 277V560C1026 585 988 585 988 560V43" />
      <path d="M1062 43V195L1052 235Q1048 250 1048 277V560C1048 617 966 617 966 560V43M1026 277H1050L1126 315M1040 225L1055 235M1046 193H1062M1003 580V603M1010 580V603" />
      <path d="M1232 43V150Q1225 205 1180 214M1276 43V150M1280 152L1250 225M1293 158L1258 240M1337 183L1300 265M1332 320H1424" />
      <path d="M1126 670V315A94 94 0 0 1 1220 222Q1245 222 1305 252 1345 280 1345 320V790M1332 790V320Q1330 285 1300 267 1240 237 1220 237A79 79 0 0 0 1141 315V685" />

      {/* sprue bars */}
      <path d="M918 603V683H988V603z" fill="#5d5d5d" stroke="none" />
      <path d="M641 645H1126L1141 683H641z" fill="url(#bar)" />
      <path d="M795 603H1080L1085 645H747z" fill="url(#bar2)" />
      <path d="M775 566H966M1048 566H1108Q1118 590 1120 645L1141 683 1105 668 1080 668V603H795L762 590M641 655H1105L1120 645M870 566V603M918 575V603M1110 566Q1108 590 1080 603" />
      <path d="M747 642L795 605 762 582z" fill="#444" />

      {/* rounded ring around the core pill */}
      <path d="M800 603Q790 478 670 478H335A137 137 0 0 0 198 617V790H259V632A93 93 0 0 1 352 541H655Q745 541 747 642z" fill="url(#ring)" stroke="none" />
      <path d="M800 603Q790 478 670 478H335A137 137 0 0 0 198 617V640" />
      <path d="M220 632Q225 500 352 500H655Q760 500 775 590M198 617L259 632M335 478L352 515V541M670 478L655 515V541M420 515V541M583 515V541" />
      <path d="M747 642Q745 541 655 541H352A93 93 0 0 0 259 632V705Q258 745 250 790M236 790V632A116 116 0 0 1 352 515H655Q740 520 762 585" />
      <path d="M362 790V667A140 139 0 0 1 641 650V683Q605 680 605 650A102 102 0 0 0 402 667V790z" fill="url(#pill)" stroke="none" />
      <path d="M362 790V667A140 139 0 0 1 641 650V683Q605 680 605 650A102 102 0 0 0 402 667V790" />
      <path d="M387 790V667A115 118 0 0 1 617 645Q622 655 641 655M362 667H402M447 540L455 575M475 530V550M533 530V550M560 540L550 572M605 652L641 645" />

      {/* upper pad */}
      <path d="M356 388H650V480Q640 512 620 512H385Q360 512 356 480z" fill="#4a4a4a" />
      <path d="M380 500V400Q385 347 435 345H572Q622 350 626 400V490Q500 505 380 500z" fill="url(#pad)" />
      <path d="M380 400Q385 347 435 345H572Q622 350 626 400 505 415 380 400z" fill="url(#padTop)" />
      <path d="M370 388Q385 336 433 336H572Q622 338 635 388M433 345Q502 358 572 345M356 400H380M626 400H650M472 500V541M533 500V541" />

      {/* side pad */}
      <path d="M222 640Q210 636 177 636A79 79 0 0 0 98 716V790H218Q218 700 208 662z" fill="url(#side)" stroke="none" />
      <path d="M222 640Q210 636 177 636A79 79 0 0 0 98 716V790M218 790Q218 700 208 662" />
      <path d="M125 790V716Q135 662 177 660H210Q222 665 222 640M185 790Q186 700 180 662M98 716H125M177 636V660M236 705H259M218 755H250" />

      {/* right pocket */}
      <path d="M1524 598H1424Q1354 610 1354 740V790H1524z" fill="#474747" stroke="none" />
      <path d="M1524 610H1424Q1375 620 1375 735V790H1524z" fill="url(#pocket)" stroke="none" />
      <path d="M1524 598H1424Q1354 610 1354 740V790M1524 610H1424Q1375 620 1375 735V790M1354 736H1524" />
    </>
  )
}

function Part() {
  return (
    <svg viewBox="0 0 757 544" className="absolute left-[200px] top-[159px] h-[544px] w-[757px]">
      <defs>
        <linearGradient id="runner"><stop offset="0" stopColor="#333" /><stop offset="0.500" stopColor="#474747" /><stop offset="0.750" stopColor="#3c3c3c" /><stop offset="1" stopColor="#606060" /></linearGradient>
        <linearGradient id="rail"><stop offset="0" stopColor="#505050" /><stop offset="0.600" stopColor="#727272" /><stop offset="1" stopColor="#606060" /></linearGradient>
        <linearGradient id="cap" x2="0.300" y2="1"><stop offset="0" stopColor="#3a3a3a" /><stop offset="0.500" stopColor="#4c4c4c" /><stop offset="1" stopColor="#303030" /></linearGradient>
        <linearGradient id="cap2" x2="1" y2="0.300"><stop offset="0" stopColor="#7c7c7c" /><stop offset="1" stopColor="#3c3c3c" /></linearGradient>
        <linearGradient id="wall"><stop offset="0" stopColor="#5a5a5a" /><stop offset="1" stopColor="#2d2d2d" /></linearGradient>
        <linearGradient id="bar" x2="0" y2="1"><stop offset="0" stopColor="#585858" /><stop offset="1" stopColor="#343434" /></linearGradient>
        <linearGradient id="bar2" x2="0" y2="1"><stop offset="0" stopColor="#383838" /><stop offset="1" stopColor="#5e5e5e" /></linearGradient>
        <linearGradient id="sweepFill" y2="1"><stop offset="0" stopColor="#3f3f3f" /><stop offset="0.600" stopColor="#545454" /><stop offset="1" stopColor="#3a3a3a" /></linearGradient>
        <linearGradient id="ring" x2="0.600" y2="1"><stop offset="0" stopColor="#3d3d3d" /><stop offset="0.400" stopColor="#525252" /><stop offset="1" stopColor="#444" /></linearGradient>
        <linearGradient id="pill"><stop offset="0" stopColor="#4b4b4b" /><stop offset="0.120" stopColor="#2d2d2d" /><stop offset="0.500" stopColor="#444" /><stop offset="1" stopColor="#666" /></linearGradient>
        <linearGradient id="pad"><stop offset="0" stopColor="#303030" /><stop offset="0.650" stopColor="#727272" /><stop offset="1" stopColor="#555" /></linearGradient>
        <radialGradient id="padTop" cx="0.300" cy="0.300" r="0.800"><stop offset="0" stopColor="#565656" /><stop offset="0.600" stopColor="#343434" /><stop offset="1" stopColor="#444" /></radialGradient>
        <radialGradient id="shine"><stop offset="0" stopColor="#b0b0b0" /><stop offset="1" stopColor="#b0b0b0" stopOpacity="0" /></radialGradient>
        <linearGradient id="side"><stop offset="0" stopColor="#555" /><stop offset="0.250" stopColor="#383838" /><stop offset="0.750" stopColor="#6b6b6b" /><stop offset="1" stopColor="#3b3b3b" /></linearGradient>
        <linearGradient id="pocket" x2="0" y2="1"><stop offset="0" stopColor="#454545" /><stop offset="1" stopColor="#5d5d5d" /></linearGradient>
        <linearGradient id="edge"><stop offset="0" stopColor="#2b2b2b" /><stop offset="1" stopColor="#5a5a5a" /></linearGradient>
        <linearGradient id="slab"><stop offset="0" stopColor="#6a6a6a" /><stop offset="1" stopColor="#555" /></linearGradient>
        <linearGradient id="fold" x2="0" y2="1"><stop offset="0" stopColor="#5a5a5a" /><stop offset="0.500" stopColor="#333" /><stop offset="1" stopColor="#555" /></linearGradient>
        <linearGradient id="bowl"><stop offset="0" stopColor="#3f3f3f" /><stop offset="0.550" stopColor="#5c5c5c" /><stop offset="0.850" stopColor="#808080" /><stop offset="1" stopColor="#666" /></linearGradient>
        <linearGradient id="toe" x2="0.700" y2="1"><stop offset="0" stopColor="#8a8a8a" /><stop offset="0.350" stopColor="#bababa" /><stop offset="0.550" stopColor="#808080" /><stop offset="0.800" stopColor="#a8a8a8" /><stop offset="1" stopColor="#555" /></linearGradient>
      </defs>
      <g transform="translate(192 -15) scale(.36996 .3635)" fill="none" stroke="#0c0c0c" strokeWidth="3">
        <path d="M-518 43H1524V1530H-518z" fill="#5d5d5d" stroke="none" />
        <path d="M918 43H966V600H918zM918 1010H966V1530H918z" fill="url(#slab)" stroke="none" />
        <path d="M43 43H93V1530H43z" fill="url(#edge)" stroke="none" />
        <path d="M87 130H133L230 378H93z" fill="url(#fold)" stroke="none" />
        <path d="M87 43V200L93 260V1345L87 1400V1530M47 300V1320M43 130H133M47 290Q60 254 93 254H170M47 378H230" />

        {/* bowl and funnel */}
        <path d="M218 43Q535 255 852 43z" fill="#6e6e6e" />
        <path d="M245 43Q535 222 825 43z" fill="url(#bowl)" />
        <path d="M430 43Q535 62 640 43" />
        <path d="M108 43L195 330Q215 388 275 388H375M118 43L204 330Q225 381 275 381H375M128 43L212 330Q228 374 275 374H375M275 374V388" />
        <path d="M875 43L728 325" stroke="#8a8a8a" strokeWidth="8" />
        <path d="M885 43L735 330Q715 388 655 388H630M875 43L728 325Q708 381 655 381H635M865 43L720 322Q700 374 655 374H630" />

        {/* upper curved runner */}
        <path d="M783 235Q870 310 920 383L935 472 960 560 966 603 870 566 845 525Q800 440 715 365L738 322z" fill="url(#sweepFill)" />
        <path d="M783 235Q870 310 920 383L935 472Q930 520 935 550M738 322Q820 390 880 500 900 530 935 550 960 570 970 590M715 365Q800 440 845 525L870 566M845 525L880 500 935 472 966 478M918 43V383H988M966 463H988" />

        <CavityHalf />
        <g transform="translate(0 1576) scale(1 -1)"><CavityHalf /></g>

        {/* highlights on the lower faces */}
        <path d="M1050 1300L1126 1261Q1135 1330 1240 1352 1130 1370 1060 1340z" fill="url(#toe)" />
        <path d="M1070 1370Q1150 1372 1190 1364 1225 1380 1228 1432 1120 1420 1070 1370z" fill="url(#toe)" stroke="none" opacity="0.500" />
        <ellipse cx="1375" cy="1315" rx="24" ry="75" transform="rotate(32 1375 1315)" fill="url(#shine)" stroke="none" />
        <path d="M226 950Q240 1050 320 1062" stroke="#b5b5b5" strokeWidth="9" />
        <path d="M228 625Q232 570 262 535" stroke="#999" strokeWidth="8" />
        <path d="M545 1036Q612 1005 622 930" stroke="#929292" strokeWidth="9" />
        <ellipse cx="540" cy="1183" rx="75" ry="26" fill="url(#shine)" stroke="none" />
        <path d="M1050 975H1098L1112 1005 1105 1010H1058z" fill="#b0b0b0" stroke="none" />

        {/* lower runner */}
        <path d="M93 1259H729L643 1378H582L540 1310 474 1296H195L93 1340z" fill="#666" stroke="none" />
        <path d="M905 1007Q850 1060 833 1107 790 1190 729 1262L643 1378H575V1417H643Q665 1417 687 1402 840 1310 909 1143 930 1110 945 1030L960 990z" fill="#515151" />
        <path d="M905 1020Q855 1090 845 1120 800 1215 725 1295" stroke="#707070" strokeWidth="22" />
        <path d="M905 1030Q862 1090 848 1130 805 1215 730 1290" stroke="#919191" strokeWidth="8" />
        <path d="M925 1080Q895 1160 860 1215 790 1330 670 1395" stroke="#707070" strokeWidth="22" />
        <path d="M925 1080Q895 1160 860 1215 790 1330 680 1390" stroke="#919191" strokeWidth="8" />
        <path d="M960 990Q940 1050 900 1080 885 1100 875 1125 830 1230 762 1295 720 1340 643 1378L670 1372 687 1402M833 1107L909 1143M729 1262L762 1295M918 1010V1530M966 1010V1530M988 1010V1530M918 1129H988M966 1070H988M47 1259H729" />

        {/* lower-left pocket */}
        <path d="M155 1530Q92 1430 92 1370 110 1296 195 1296H474Q582 1300 582 1378 580 1420 500 1530H405L495 1405Q497 1370 474 1368H195Q165 1375 175 1405 195 1460 268 1530z" fill="url(#fold)" />
        <path d="M430 1530L520 1415" stroke="#707070" strokeWidth="26" />
        <path d="M435 1530L522 1418" stroke="#a0a0a0" strokeWidth="9" />
        <path d="M500 1530L562 1435" stroke="#858585" strokeWidth="9" />
        <path d="M190 1530Q118 1450 118 1390 130 1328 195 1328H474Q552 1330 552 1390 545 1430 475 1530M195 1296V1368M474 1296V1368M125 1320L175 1383M92 1370L118 1420 175 1400M545 1320L497 1380M500 1410L565 1450M552 1412H582M552 1385L582 1355M43 1318Q60 1345 92 1345 110 1350 118 1390M43 1340Q70 1365 110 1370M43 1390Q70 1408 92 1405" />
      </g>
      <path d="M0 1H756M0 542H756M756 1V542" stroke="#111" strokeWidth="1.500" fill="none" />
      <path d="M0 1H756V542H0" stroke="#ff1a1a" strokeWidth="1.500" fill="none" strokeDasharray="18 10" />
    </svg>
  )
}

function Viewport() {
  return (
    <section className="flex min-w-0 flex-1 flex-col bg-white">
      <div className="relative flex-1 overflow-hidden border-b border-[#dcdcdc] bg-[linear-gradient(#959faa_0%,#a7b0b9_18%,#bbc0ca_40%,#c9cdd1_49%,#dde1e3_66%,#e4e5e9_74%,#f2f4f6_90%,#ffffff_100%)]">
        <Part />
        <Axis up="#00b400" right="#c00000" className="left-[46px] top-[7px]" />
        <Axis up="#00b400" right="#c00000" className="left-[46px] top-[755px]" />
        <Axis up="#e00000" right="#e00000" className="left-[568px] top-[380px]" />
        <div className="absolute right-[6px] top-[6px] h-[72px] w-[60px]">
          <Axis up="#00b400" right="#c00000" className="left-0 top-0" />
          <span className="absolute left-1 top-[50px] text-[12px] font-bold leading-4 text-white">刀</span>
        </div>
        <span className="absolute bottom-[7px] left-5 text-[12px] font-bold leading-4">俯檢視</span>
        <div className="absolute bottom-[9px] right-[23px] w-[97px] border-x border-black text-center text-[12px] font-bold leading-3">
          <div className="border-b border-black font-['DejaVu_Sans'] text-[11px]">33.217 mm</div>
          <div>公制</div>
        </div>
      </div>
      <div className="mt-px flex h-[25px] border-t border-[#c4c4c4] pt-[3px]">
        <button className="w-16 border-r border-[#c4c4c4] text-[11px] leading-4 text-[#555]">翋弝芞醱唧</button>
        <div className="flex-1 border-t border-[#c4c4c4] bg-[#f0f0f0]" />
      </div>
    </section>
  )
}

function ToolpathPanel() {
  return (
    <section className="flex w-[402px] shrink-0 flex-col border-r-4 border-[#f0f0f0] bg-[#fafafa]">
      <div className="flex h-8 items-center bg-[#f5f5f5] pl-[5px] pr-[3px]">
        <h2 className="flex-1 text-[19px] leading-6 text-[#606060]">刀具路徑</h2>
        {["M2 6H12L7 11z", "M4.500 2.500H9.500V8H4.500zM8.500 3V8M3 8H11M7 8V12", "M3 3L11 11M11 3L3 11"].map((d, i) => (
          <button key={d} aria-label="panel" className="ml-[3px] h-[14px] w-[14px]">
            <svg viewBox="0 0 14 14"><path d={d} fill={i === 0 ? "#606060" : "none"} stroke="#606060" strokeWidth={i === 2 ? 1.500 : 1} /></svg>
          </button>
        ))}
      </div>
      <div className="flex h-14 items-start pl-[5px] pt-[6px]"><span className="h-[10px] w-[10px] bg-[#57937f]" /></div>
      <div className="mb-[22px] ml-[2px] mr-[2px] flex-1 border border-[#c4c4c4] bg-white" />
    </section>
  )
}

const btn = "h-6 w-[107px] border border-[#adadad] bg-[#e1e1e1] text-[12px] leading-4 disabled:border-[#bfbfbf] disabled:bg-[#cccccc] disabled:text-[#838383]"
const box = "h-[13px] w-[13px] shrink-0 appearance-none border border-[#333333] bg-white checked:bg-[#333333] checked:shadow-[inset_0_0_0_2px_#ffffff]"
const field = "h-[26px] w-[70px] border border-[#7a7a7a] bg-[#ffff80] px-[3px] pb-[6px] text-[12px] leading-4 shadow-[inset_0_0_0_1px_#ffffff]"

const tabs = ["刀具參數", "曲面參數", "粗切參數", "挖槽參數"]
const entryOptions = ["指定進刀點", "由切削範圍外下刀", "下刀位置對齊開始孔"]

function PocketDialog() {
  return (
    <div role="dialog" aria-labelledby="dlg-title" className="absolute left-[33px] top-[195px] flex h-[670px] w-[803px] flex-col border border-[#111111] bg-[#f0f0f0] shadow-[0_8px_20px_2px_rgba(0,0,0,0.35)]">
      <div className="flex h-[30px] shrink-0 items-center justify-between bg-white pl-[9px] pr-[9px]">
        <h2 id="dlg-title" className="text-[12px] leading-4">曲面粗加工挖槽</h2>
        <button aria-label="close" className="h-3 w-3"><svg viewBox="0 0 12 12"><path d="M1 1L11 11M11 1L1 11" stroke="#111" strokeWidth="1.100" /></svg></button>
      </div>
      <div role="tablist" className="flex h-[30px] shrink-0 items-end pl-[9px]">
        {tabs.map((t, i) => (
          <button
            key={t}
            role="tab"
            aria-selected={i === 2}
            className={i === 2
              ? "relative z-10 -mb-px h-[23px] w-[62px] border border-b-0 border-[#dcdcdc] bg-white pb-1 text-[12px] leading-4"
              : "h-5 w-[60px] border border-b-0 border-[#dcdcdc] bg-[#f0f0f0] text-[12px] leading-4 last:w-[57px]"}
          >
            {t}
          </button>
        ))}
      </div>
      <div className="ml-[7px] mr-[9px] flex-1 border border-[#dcdcdc] bg-white">
        <div className="flex pl-[26px]">
          <div className="w-[252px] pt-[25px]">
            <div className="flex items-center justify-between pl-[3px] pr-[5px]">
              <button className="h-6 w-[107px] border-2 border-[#0078d7] bg-[#e1e1e1] text-[12px] leading-4">整體公差(T)</button>
              <input aria-label="整體公差" className={field} defaultValue="0.2" />
            </div>
            <div className="mt-[14px] flex items-center justify-between pl-[2px] pr-[5px]">
              <label htmlFor="zstep" className="text-[12px] leading-4">Z 最大步進量：</label>
              <input id="zstep" className={field} defaultValue="2.0" />
            </div>
            <div className="mt-6 flex h-[47px] items-center gap-[22px] border border-[#dcdcdc] pl-[22px]">
              {["順銑", "逆銑"].map((t, i) => (
                <label key={t} className="flex w-[72px] items-center gap-[3px] text-[12px] leading-4">
                  <input type="radio" name="direction" defaultChecked={i === 0} className={`${box} rounded-full`} />
                  {t}
                </label>
              ))}
            </div>
          </div>
          <fieldset className="ml-[21px] mt-[13px] h-[148px] w-[382px] border border-[#dcdcdc] pl-[23px]">
            <legend className="-ml-[17px] px-[3px] text-[12px] leading-4">進刀選項</legend>
            <div className="flex items-end gap-[18px] pt-[14px]">
              <input type="checkbox" aria-label="螺旋進刀" className={`${box} mb-[3px]`} />
              <button disabled className={btn}>螺旋進刀</button>
            </div>
            <div className="mt-[7px]">
              {entryOptions.map(t => (
                <label key={t} className="flex h-[26px] items-center gap-[3px] text-[12px] leading-4">
                  <input type="checkbox" className={box} />
                  {t}
                </label>
              ))}
            </div>
          </fieldset>
        </div>
        <div className="mt-[198px] flex items-end gap-3 pl-[143px]">
          <input type="checkbox" aria-label="銑平面" className={`${box} mb-[3px] mr-[6px]`} />
          <button disabled className={btn}>銑平面(F)</button>
          <button className={btn}>切削深度(D)</button>
          <button className={btn}>間隙設定(G)</button>
          <button className={`${btn} w-[119px]`}>進階設定(E)</button>
        </div>
      </div>
      <div className="flex h-[42px] shrink-0 items-end justify-end gap-[6px] pb-px pr-3">
        <button aria-label="ok" className="flex h-8 w-[61px] items-center justify-center border-2 border-[#0078d7] bg-[#e1e1e1]">
          <svg viewBox="0 0 20 20" className="h-5 w-5"><path d="M2 10L5 9 8 13Q12 5 18 1 12 9 9 19H7Q5 14 2 12z" fill="#4cc417" stroke="#1f7a0a" /></svg>
        </button>
        <button aria-label="cancel" className="flex h-8 w-[61px] items-center justify-center border border-[#adadad] bg-[#e1e1e1]">
          <svg viewBox="0 0 20 20" className="h-5 w-5"><path d="M1 4L4 1H6L10 6 14 1H16L19 4 14 10 19 16 16 19H14L10 14 6 19H4L1 16 6 10z" fill="#ff4015" stroke="#a82000" /></svg>
        </button>
        <button aria-label="help" className="flex h-8 w-[61px] items-center justify-center border border-[#adadad] bg-[#e1e1e1]">
          <svg viewBox="0 0 20 20" className="h-5 w-5">
            <path d="M3.500 6Q4 1.500 10 1.500 16.500 1.500 16 6.500 15.500 9 12 11V14H8.500V10Q12.500 8 12.500 6 12 4.500 10 4.500 8 4.500 7 7z" fill="#b9b9d2" stroke="#333" />
            <rect x="8" y="15.500" width="4.500" height="3.500" rx="1.500" fill="#b9b9d2" stroke="#333" />
          </svg>
        </button>
      </div>
    </div>
  )
}

const cell = "flex items-center justify-center border border-[#9b9b9b] bg-white whitespace-nowrap"
const swatches = [
  { color: "#000080", d: "M4 1H10V8H4zM8 4H14V12H8z", fill: "none" },
  { color: "#808080", d: "M4 3L9 1 14 3V9L9 12 4 9zM4 3L9 5 14 3M9 5V12", fill: "#777" },
  { color: "#ff8040", d: "M4 4L14 1V9L4 12zM9 3V10M4 8L14 5", fill: "none" },
]
const styleCells = [
  { name: "point style", width: "w-[42px]", d: "M2 6H12M7 1V11M3 2L11 10M11 2L3 10" },
  { name: "line style", width: "w-[61px]", d: "M2 6H50" },
  { name: "line width", width: "w-16", d: "M2 6H52" },
]

function StatusBar() {
  return (
    <footer className="relative flex h-[27px] shrink-0 items-start border-b-2 border-[#0b1822] bg-[#606060] text-[12px] leading-4">
      <p className="flex-1 whitespace-pre pl-1 pt-[5px] text-[11px] text-white">WCS: 俯檢視  刀具/繪圖平面: 俯檢視</p>
      <div className="mt-[2px] flex h-[23px] gap-[2px] font-['Liberation_Serif','Noto_Sans_CJK_TC',serif]">
        <button className={`${cell} w-6`}>3D</button>
        <button className={`${cell} w-[60px]`}>螢幕檢視</button>
        <button className={`${cell} w-[45px]`}>WCS</button>
        <button className={`${cell} w-[26px]`}>平面</button>
        <div className="flex">
          <label htmlFor="zdepth" className="flex w-[14px] items-center justify-center bg-[#e8e8e8] font-['Liberation_Sans']">Z</label>
          <div className="flex w-[83px] items-center border border-[#7a7a7a] bg-white pl-[3px]">
            <input id="zdepth" className="h-[17px] w-4 bg-[#3399ff] text-white" defaultValue="0.0" />
            <span className="h-[17px] flex-1 bg-[#ffff80]" />
            <svg viewBox="0 0 18 10" className="h-[10px] w-[18px]"><path d="M5 3L9 7 13 3" fill="none" stroke="#444" strokeWidth="1.300" /></svg>
          </div>
        </div>
        {swatches.map(s => (
          <button key={s.color} aria-label={s.color} className="flex w-[31px] flex-col items-center justify-between border border-[#9b9b9b] bg-white p-px">
            <svg viewBox="0 0 18 13" className="h-[13px] w-[18px]"><path d={s.d} fill={s.fill} stroke="#444" /></svg>
            <span className="h-[6px] w-full" style={{ backgroundColor: s.color }} />
          </button>
        ))}
        <div className="flex">
          <label htmlFor="level" className="flex w-7 items-center justify-center bg-[#ff8080]">層別</label>
          <div className="relative">
            <select id="level" className="h-[23px] w-[101px] appearance-none border border-[#7a7a7a] bg-white px-[3px]"><option>1</option></select>
            <svg viewBox="0 0 18 10" className="pointer-events-none absolute right-0 top-[7px] h-[10px] w-[18px]"><path d="M5 3L9 7 13 3" fill="none" stroke="#444" strokeWidth="1.300" /></svg>
          </div>
        </div>
        <button className={`${cell} w-[33px]`}>屬性</button>
        {styleCells.map(s => (
          <button key={s.name} aria-label={s.name} className={`${cell} ${s.width}`}>
            <svg viewBox="0 0 54 12" preserveAspectRatio="xMinYMid slice" className="h-3 w-full"><path d={s.d} stroke="#222" /></svg>
          </button>
        ))}
        <button className={`${cell} w-10`}>群組</button>
        <button className={`${cell} w-[18px]`}>?</button>
      </div>
      <span className="absolute right-[19px] top-px whitespace-nowrap font-['Liberation_Sans','Noto_Sans_CJK_SC',sans-serif] text-[18px] font-bold leading-6 text-white [-webkit-text-stroke:3px_#e8262a] [paint-order:stroke_fill]">三维网www.3dportal.cn</span>
    </footer>
  )
}

export default function App() {
  return (
    <div className="relative flex h-screen flex-col overflow-hidden bg-[#f0f0f0] font-['Open_Sans','Noto_Sans_CJK_TC',sans-serif] text-black">
      <Header />
      <div className="flex min-h-0 flex-1">
        <aside className="w-[26px] shrink-0">
          <SideTools items=": sExtrude sRevolve sSweep sLoft | sFillet > sFillet1 > | sShell sBool sDraft > | sThick sCopy > sPat > sNet sFind sTree : mSel mPush mSplit | eStep eDome xDome | hole xCube wCube rCube | pStep pStep2 gStep gStep2" />
        </aside>
        <div className="flex min-w-0 flex-1 flex-col">
          <p className="flex h-[33px] shrink-0 items-center pb-[2px] pl-[189px] text-[12px] leading-4">功能狀態列</p>
          <main className="flex min-h-0 flex-1 border-t-4 border-[#e5e5e5]">
            <ToolpathPanel />
            <Viewport />
          </main>
        </div>
        <aside className="flex w-[30px] shrink-0 flex-col gap-[33px] pr-[3px] pt-[2px]">
          <SideTools items=": top iso right levels repaint rGear open" />
          <SideTools items=": bDim bSurf bPoint bLine bArc bSpline bNet bSolid bWire ban | bColor bGroup bGroup2 | bPalette bLayers bBan |" />
        </aside>
      </div>
      <StatusBar />
      <PocketDialog />
    </div>
  )
}
